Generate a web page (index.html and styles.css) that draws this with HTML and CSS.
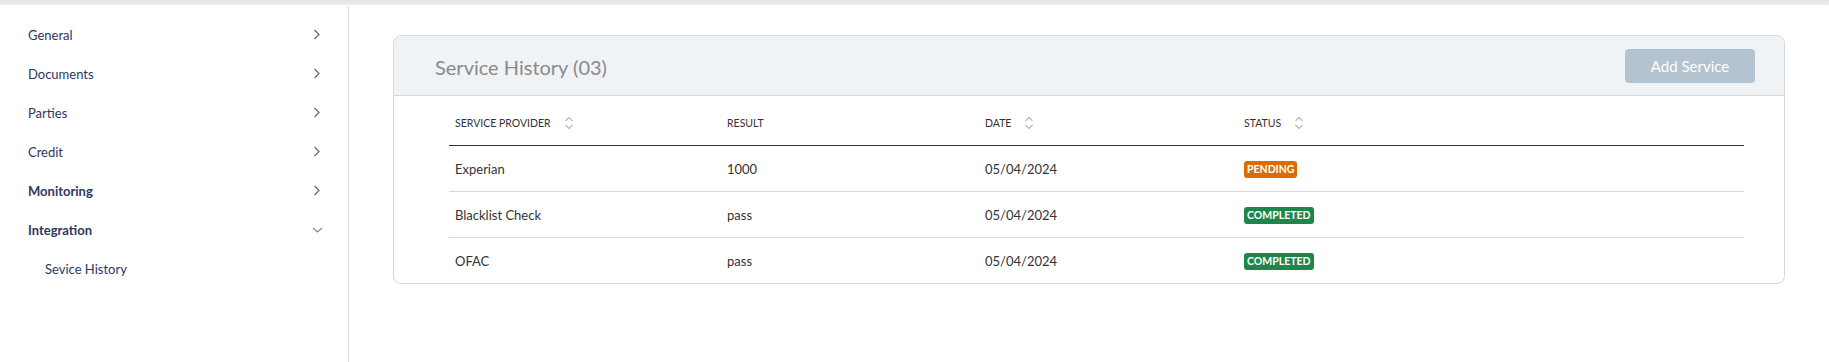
FILE: index.html
```html
<!DOCTYPE html>
<html>
<head>
<meta charset="utf-8">
<link rel="stylesheet" href="styles.css">
</head>
<body>
<div class="topbar"></div>
<div class="layout">
  <nav class="sidebar">
    <div class="nav-item"><span>General</span><svg class="chev" width="8" height="11" viewBox="0 0 8 11"><path d="M1.5 1 L6 5.5 L1.5 10" fill="none" stroke="#5f6b85" stroke-width="1.3"/></svg></div>
    <div class="nav-item"><span>Documents</span><svg class="chev" width="8" height="11" viewBox="0 0 8 11"><path d="M1.5 1 L6 5.5 L1.5 10" fill="none" stroke="#5f6b85" stroke-width="1.3"/></svg></div>
    <div class="nav-item"><span>Parties</span><svg class="chev" width="8" height="11" viewBox="0 0 8 11"><path d="M1.5 1 L6 5.5 L1.5 10" fill="none" stroke="#5f6b85" stroke-width="1.3"/></svg></div>
    <div class="nav-item"><span>Credit</span><svg class="chev" width="8" height="11" viewBox="0 0 8 11"><path d="M1.5 1 L6 5.5 L1.5 10" fill="none" stroke="#5f6b85" stroke-width="1.3"/></svg></div>
    <div class="nav-item bold"><span>Monitoring</span><svg class="chev" width="8" height="11" viewBox="0 0 8 11"><path d="M1.5 1 L6 5.5 L1.5 10" fill="none" stroke="#5f6b85" stroke-width="1.3"/></svg></div>
    <div class="nav-item bold"><span>Integration</span><svg class="chev down" width="11" height="8" viewBox="0 0 11 8"><path d="M1 2 L5.5 6 L10 2" fill="none" stroke="#7a869e" stroke-width="1.2"/></svg></div>
    <div class="nav-sub">Sevice History</div>
  </nav>
  <main class="main">
    <section class="card">
      <header class="card-head">
        <h2 class="card-title">Service History (03)</h2>
        <button class="btn">Add Service</button>
      </header>
      <div class="card-body">
        <table class="table">
          <thead>
            <tr>
              <th class="c1"><span class="th">SERVICE PROVIDER<svg class="sort" width="10" height="14" viewBox="0 0 10 14"><path d="M1.5 5 L5 1.5 L8.5 5 M1.5 9 L5 12.5 L8.5 9" fill="none" stroke="#a7b9cc" stroke-width="1.1"/></svg></span></th>
              <th class="c2"><span class="th">RESULT</span></th>
              <th class="c3"><span class="th">DATE<svg class="sort" width="10" height="14" viewBox="0 0 10 14"><path d="M1.5 5 L5 1.5 L8.5 5 M1.5 9 L5 12.5 L8.5 9" fill="none" stroke="#a7b9cc" stroke-width="1.1"/></svg></span></th>
              <th class="c4"><span class="th">STATUS<svg class="sort" width="10" height="14" viewBox="0 0 10 14"><path d="M1.5 5 L5 1.5 L8.5 5 M1.5 9 L5 12.5 L8.5 9" fill="none" stroke="#a7b9cc" stroke-width="1.1"/></svg></span></th>
            </tr>
          </thead>
          <tbody>
            <tr><td>Experian</td><td>1000</td><td>05/04/2024</td><td><span class="badge pending">PENDING</span></td></tr>
            <tr><td>Blacklist Check</td><td>pass</td><td>05/04/2024</td><td><span class="badge done">COMPLETED</span></td></tr>
            <tr class="last"><td>OFAC</td><td>pass</td><td>05/04/2024</td><td><span class="badge done">COMPLETED</span></td></tr>
          </tbody>
        </table>
      </div>
    </section>
  </main>
</div>
</body>
</html>
```

FILE: styles.css
```css
* { box-sizing: border-box; }
html, body { margin: 0; padding: 0; background: #fff; }
body {
  font-family: "Lato", "Open Sans", "Liberation Sans", sans-serif;
  width: 1829px;
  height: 362px;
  overflow: hidden;
}
.topbar {
  height: 5px;
  background: linear-gradient(#e2e2e6, #efeff2);
}
.layout {
  display: flex;
  height: 357px;
}
.sidebar {
  width: 349px;
  flex: none;
  border-right: 1px solid #dcdcdc;
  margin-top: 1px;
  padding-top: 9px;
}
.nav-item {
  display: flex;
  align-items: center;
  justify-content: space-between;
  height: 39px;
  padding-left: 28px;
  padding-right: 27px;
  font-size: 13px;
  color: #2d3760;
}
.nav-item.bold { font-weight: 700; }
.chev { display: block; }
.chev.down { margin-right: -2px; }
.nav-sub {
  height: 39px;
  display: flex;
  align-items: center;
  padding-left: 45px;
  font-size: 13px;
  color: #2d3760;
}
.main {
  flex: 1;
  padding: 30px 44px 0 44px;
}
.card {
  border: 1px solid #d8d8d8;
  border-radius: 8px;
  overflow: hidden;
  height: 249px;
}
.card-head {
  height: 60px;
  background: #f0f3f6;
  border-bottom: 1px solid #d8d8d8;
  display: flex;
  align-items: center;
  justify-content: space-between;
  padding: 0 29px 0 41px;
}
.card-title {
  margin: 0;
  padding-top: 2px;
  font-weight: 400;
  font-size: 20px;
  color: #8a8a8a;
}
.btn {
  width: 130px;
  height: 34px;
  border: none;
  border-radius: 4px;
  background: #b3c3cf;
  color: #fff;
  font-family: inherit;
  font-size: 15px;
  margin-top: 1px;
}
.card-body {
  padding: 0 40px 0 55px;
}
.table {
  width: 100%;
  border-collapse: collapse;
  table-layout: fixed;
}
.table th {
  height: 49px;
  text-align: left;
  font-weight: 400;
  font-size: 10.5px;
  color: #333;
  padding: 5px 6px 0 6px;
  border-bottom: 1px solid #333;
}
.c1 { width: 272px; }
.c2 { width: 258px; }
.c3 { width: 259px; }
.th {
  display: inline-flex;
  align-items: center;
  gap: 13px;
}
.sort { display: block; }
.table td {
  height: 46px;
  padding: 2px 6px 0 6px;
  font-size: 13px;
  color: #333;
  border-bottom: 1px solid #d9d9d9;
}
.table tr.last td { border-bottom: none; }
.badge {
  display: inline-block;
  color: #fff;
  font-weight: 700;
  font-size: 10.5px;
  line-height: 17px;
  height: 17px;
  padding: 0 3px;
  border-radius: 3px;
  vertical-align: middle;
}
.pending { background: #d96c02; }
.done { background: #1e864a; }
```
